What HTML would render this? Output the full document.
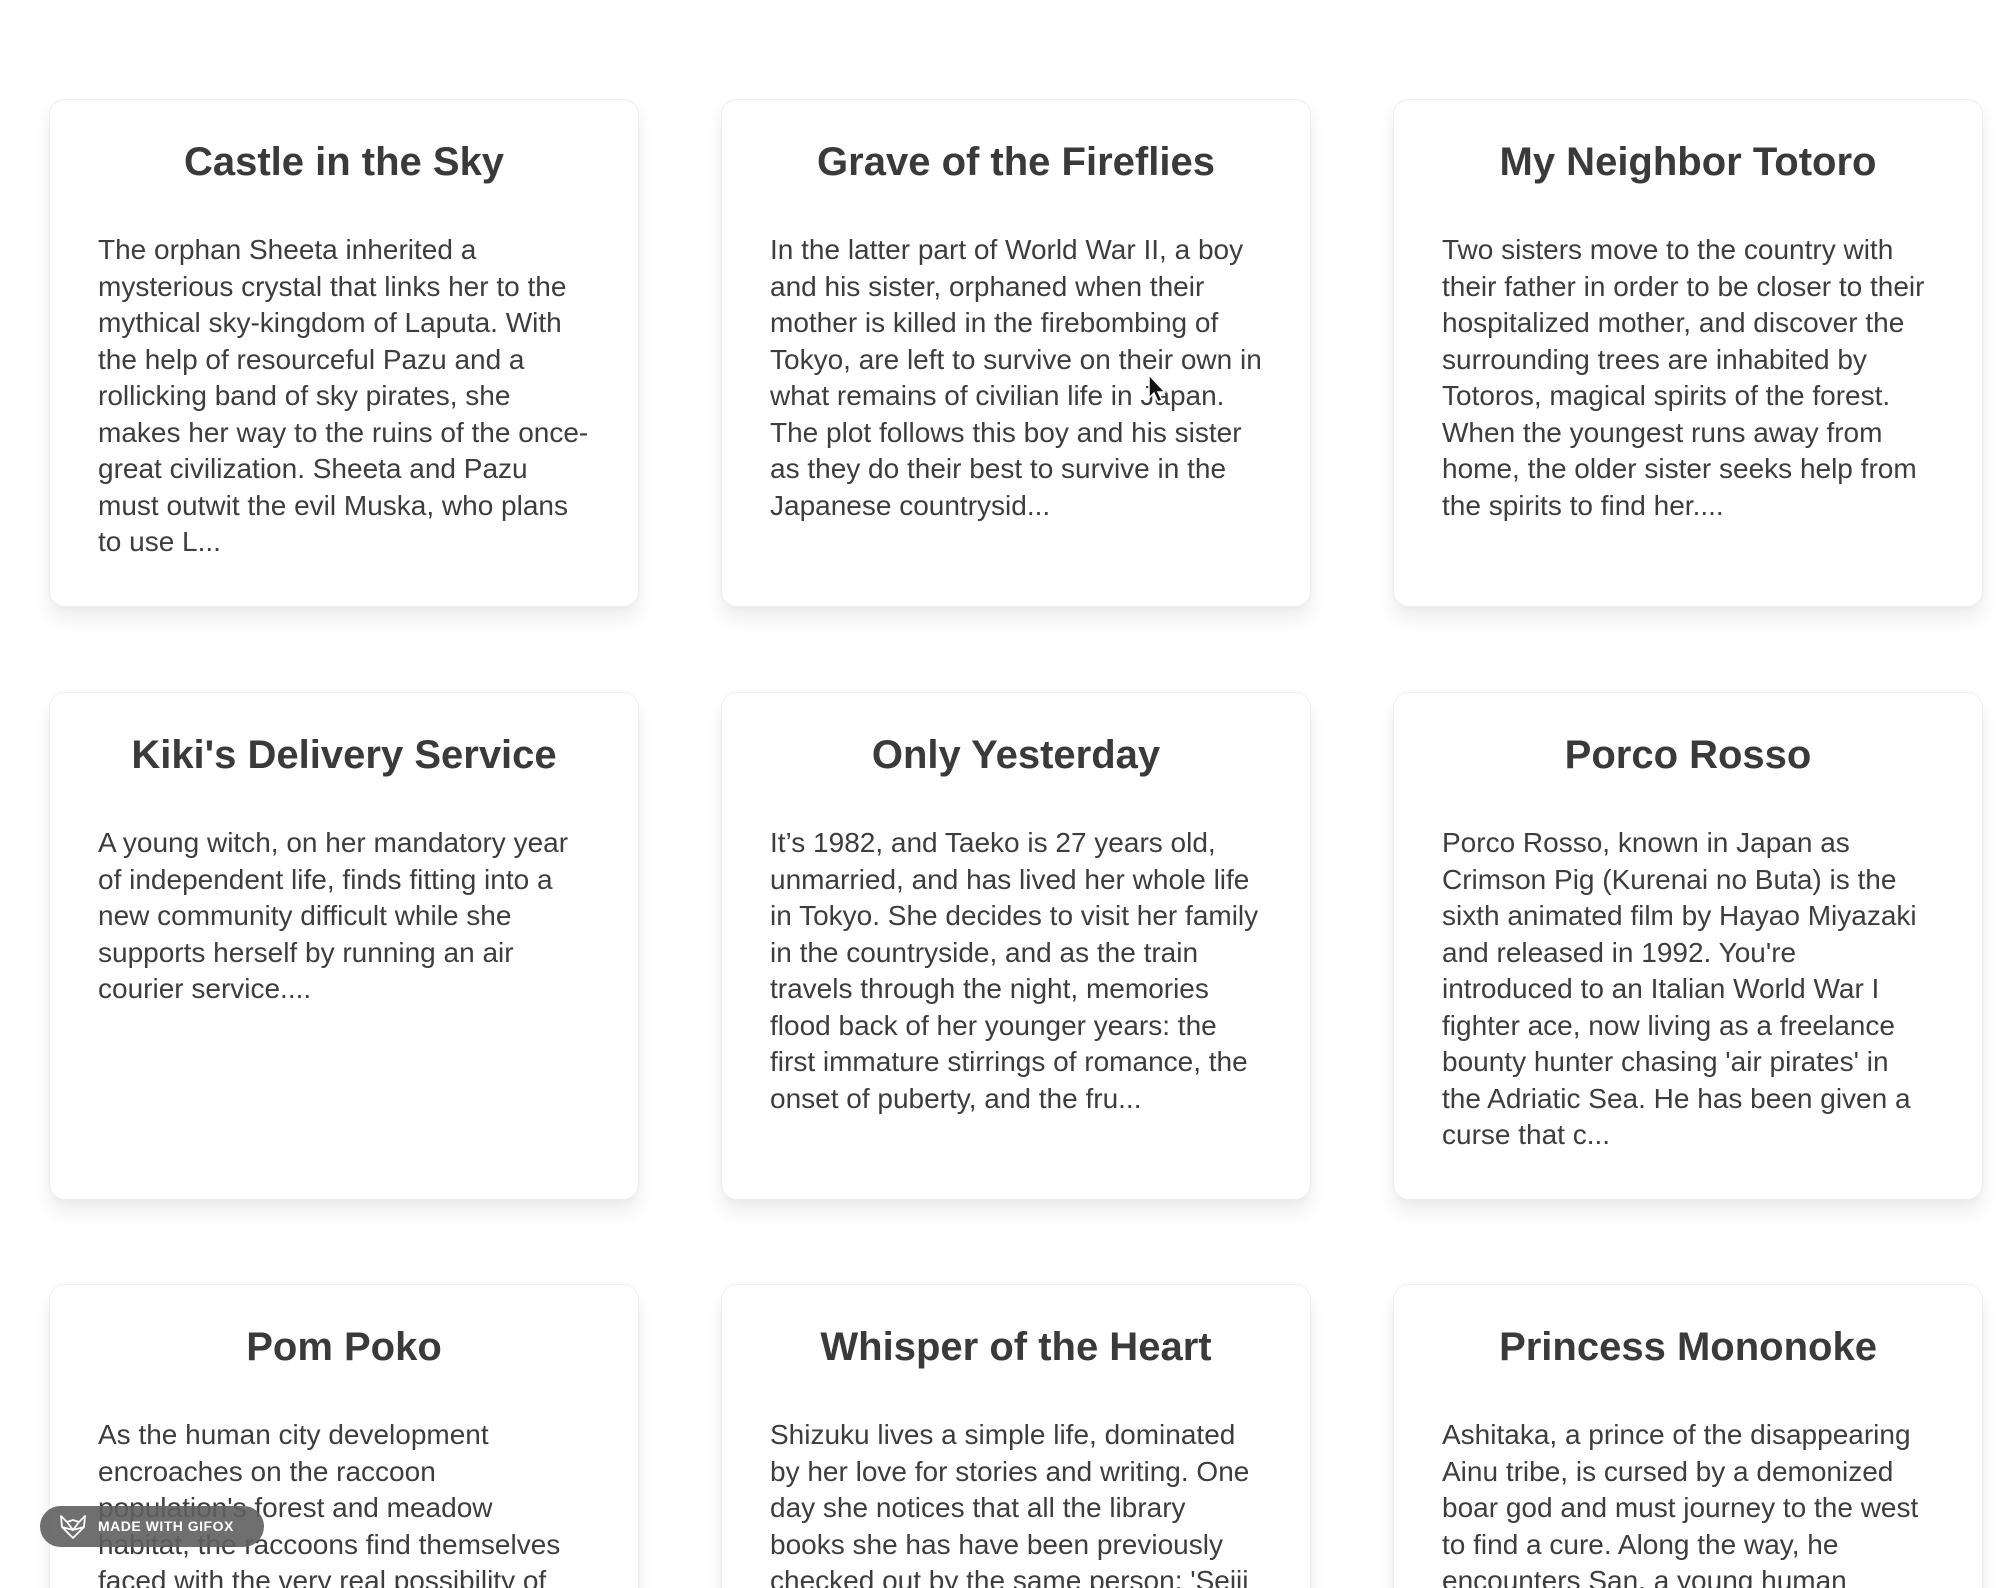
<!DOCTYPE html>
<html><head><meta charset="utf-8"><style>
html,body{margin:0;padding:0;background:#fff;width:2016px;height:1588px;overflow:hidden;}
#wrap{position:relative;width:2016px;height:1588px;overflow:hidden;font-family:"Liberation Sans",Arial,sans-serif;}
.card{position:absolute;width:590px;height:508px;background:#fff;border:1px solid #efefef;border-radius:16px;box-shadow:0 12px 18px rgba(0,0,0,0.07),0 2px 6px rgba(0,0,0,0.03);box-sizing:border-box;padding:38px 48px 0 48px;overflow:hidden;}
.card h2{margin:0;font-size:40px;line-height:48px;font-weight:bold;text-align:center;color:#3a3a3a;}
.card p{margin:46px 0 0 0;font-size:28px;line-height:36.5px;color:#3d3d3d;}
.card p.nw{white-space:nowrap;margin-right:-40px;}
.badge{position:absolute;left:40px;top:1506px;width:224px;height:41px;border-radius:21px;background:rgba(95,95,95,0.9);color:#fff;font-weight:bold;font-size:14px;line-height:41px;letter-spacing:.5px;}
.badge span{position:absolute;left:58px;}
</style></head><body><div id="wrap">
<div class="card" style="left:49px;top:99px"><h2>Castle in the Sky</h2><p class="nw">The orphan Sheeta inherited a<br>mysterious crystal that links her to the<br>mythical sky-kingdom of Laputa. With<br>the help of resourceful Pazu and a<br>rollicking band of sky pirates, she<br>makes her way to the ruins of the once-<br>great civilization. Sheeta and Pazu<br>must outwit the evil Muska, who plans<br>to use L...</p></div>
<div class="card" style="left:721px;top:99px"><h2>Grave of the Fireflies</h2><p class="nw">In the latter part of World War II, a boy<br>and his sister, orphaned when their<br>mother is killed in the firebombing of<br>Tokyo, are left to survive on their own in<br>what remains of civilian life in Japan.<br>The plot follows this boy and his sister<br>as they do their best to survive in the<br>Japanese countrysid...</p></div>
<div class="card" style="left:1393px;top:99px"><h2>My Neighbor Totoro</h2><p>Two sisters move to the country with their father in order to be closer to their hospitalized mother, and discover the surrounding trees are inhabited by Totoros, magical spirits of the forest. When the youngest runs away from home, the older sister seeks help from the spirits to find her....</p></div>
<div class="card" style="left:49px;top:692px"><h2>Kiki's Delivery Service</h2><p>A young witch, on her mandatory year of independent life, finds fitting into a new community difficult while she supports herself by running an air courier service....</p></div>
<div class="card" style="left:721px;top:692px"><h2>Only Yesterday</h2><p>It’s 1982, and Taeko is 27 years old, unmarried, and has lived her whole life in Tokyo. She decides to visit her family in the countryside, and as the train travels through the night, memories flood back of her younger years: the first immature stirrings of romance, the onset of puberty, and the fru...</p></div>
<div class="card" style="left:1393px;top:692px"><h2>Porco Rosso</h2><p>Porco Rosso, known in Japan as Crimson Pig (Kurenai no Buta) is the sixth animated film by Hayao Miyazaki and released in 1992. You're introduced to an Italian World War I fighter ace, now living as a freelance bounty hunter chasing 'air pirates' in the Adriatic Sea. He has been given a curse that c...</p></div>
<div class="card" style="left:49px;top:1284px"><h2>Pom Poko</h2><p>As the human city development encroaches on the raccoon population's forest and meadow habitat, the raccoons find themselves faced with the very real possibility of extinction...</p></div>
<div class="card" style="left:721px;top:1284px"><h2>Whisper of the Heart</h2><p>Shizuku lives a simple life, dominated by her love for stories and writing. One day she notices that all the library books she has have been previously checked out by the same person: 'Seiji Amasawa'...</p></div>
<div class="card" style="left:1393px;top:1284px"><h2>Princess Mononoke</h2><p>Ashitaka, a prince of the disappearing Ainu tribe, is cursed by a demonized boar god and must journey to the west to find a cure. Along the way, he encounters San, a young human woman fighting to protect the forest...</p></div>
<svg style="position:absolute;left:1148px;top:374px" width="22" height="32" viewBox="0 0 22 32"><path d="M1 1 L1 24 L6 19 L10 28 L14 26 L10 18 L17 18 Z" fill="#111" stroke="#fff" stroke-width="1.5"/></svg>
<div class="badge"><svg style="position:absolute;left:18px;top:8px" width="30" height="26" viewBox="0 0 30 26"><path d="M3 2 L9 8 L15 6 L21 8 L27 2 L26 13 L15 24 L4 13 Z M9 8 L15 16 L21 8 M4 13 L15 16 L26 13" fill="none" stroke="#fff" stroke-width="1.8" stroke-linejoin="round"/></svg><span>MADE WITH GIFOX</span></div>
</div></body></html>
